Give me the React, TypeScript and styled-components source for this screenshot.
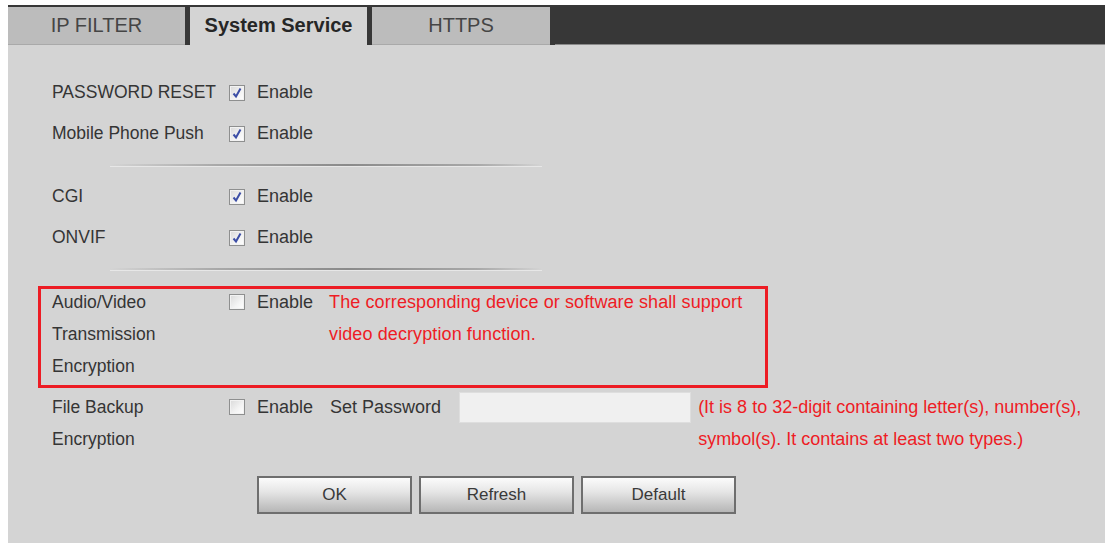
import styled, { createGlobalStyle } from "styled-components";

const GlobalStyle = createGlobalStyle`
  body {
    margin: 0;
    background: #ffffff;
    font-family: "Liberation Sans", Arial, sans-serif;
    color: #353535;
  }
`;

/**
 * Outer frame with the white page border
 */
const Page = styled.div`
  padding: 5px 0 0 8px;
`;

const Panel = styled.div`
  background: #d4d4d4;
  height: 538px;
  overflow: hidden;
`;

/**
 * Tab strip
 */
const TabBar = styled.div`
  display: flex;
  gap: 5px;
  height: 40px;
  padding-top: 2px;
  box-sizing: border-box;
  background: #373737;
`;

const Tab = styled.div<{ active?: boolean; width?: number }>`
  width: ${props => props.width ?? 177}px;
  display: flex;
  align-items: center;
  justify-content: center;
  font-size: 20px;
  background: ${props => props.active ? "#d4d4d4" : "#bcbcbc"};
  color: ${props => props.active ? "#262626" : "#454545"};
  font-weight: ${props => props.active ? "bold" : "normal"};
  border-bottom: 1px solid ${props => props.active ? "#d4d4d4" : "#a9a9a9"};
`;

const TabFiller = styled.div`
  flex: 1;
  border-bottom: 1px solid #8a8a8a;
`;

/**
 * Settings form
 */
const Form = styled.div`
  padding-top: 27px;
  font-size: 18px;
`;

const Row = styled.div`
  display: grid;
  grid-template-columns: 177px 1fr;
  align-items: center;
  height: 41px;
  padding-left: 44px;
`;

const Options = styled.div<{ top?: boolean }>`
  display: flex;
  align-items: ${props => props.top ? "flex-start" : "center"};
`;

const Divider = styled.div<{ after?: number }>`
  width: 432px;
  height: 2px;
  margin: 10px 0 ${props => props.after ?? 10}px 102px;
  background: linear-gradient(
    to right,
    rgba(150, 150, 150, 0) 0%,
    #a8a8a8 25%,
    #8a8a8a 55%,
    #a8a8a8 85%,
    rgba(150, 150, 150, 0) 100%
  );
  box-shadow: 0 1px 0 rgba(255, 255, 255, 0.45);
`;

/**
 * Red outline around the encryption option
 */
const Highlight = styled.div`
  width: 730px;
  margin-left: 30px;
  padding: 0 0 6px 14px;
  box-sizing: border-box;
  outline: 3px solid #ed1c24;
  outline-offset: -3px;
`;

const TallRow = styled.div<{ indent?: number }>`
  display: grid;
  grid-template-columns: 177px 1fr;
  align-items: start;
  line-height: 32px;
  padding-left: ${props => props.indent ?? 0}px;
  margin-top: ${props => props.indent ? 3 : 0}px;
`;

const Label = styled.div`
  font-size: 17.5px;
`;

const CheckBox = styled.span<{ top?: number }>`
  width: 16px;
  height: 16px;
  box-sizing: border-box;
  flex: none;
  border: 1px solid #8e8f8f;
  background: linear-gradient(135deg, #d9d9d9 0%, #f4f4f4 60%, #ffffff 100%);
  box-shadow: inset 0 0 0 1px #f2f2f2;
  display: flex;
  align-items: center;
  justify-content: center;
  margin-top: ${props => props.top ?? 0}px;
`;

const EnableText = styled.span`
  margin-left: 12px;
`;

const Note = styled.div<{ width: number; left: number; spacing?: number }>`
  color: #ee1c25;
  margin-left: ${props => props.left}px;
  max-width: ${props => props.width}px;
  letter-spacing: ${props => props.spacing ?? 0}px;
`;

const FieldLabel = styled.span`
  margin-left: 17px;
`;

const PasswordInput = styled.input`
  width: 232px;
  height: 31px;
  margin: 1px 0 0 18px;
  box-sizing: border-box;
  border: 1px solid #dedede;
  background: #f0f0f0;
  outline: none;
`;

const ButtonRow = styled.div`
  display: flex;
  gap: 7px;
  margin: 21px 0 0 249px;
`;

const Button = styled.button`
  width: 155px;
  height: 38px;
  border: 2px solid #6e6e6e;
  background: linear-gradient(to bottom, #fbfbfb 0%, #e6e6e6 40%, #b6b6b6 100%);
  font-family: "Liberation Sans", Arial, sans-serif;
  font-size: 17px;
  color: #3a3a3a;
  padding: 0;
`;

const Check = ({ checked, top }: { checked?: boolean; top?: number }) => (
  <CheckBox top={top}>
    {checked && (
      <svg width="12" height="12" viewBox="0 0 12 12">
        <path d="M2.5 6.5 L5 9.5 L9.5 1.5" fill="none" stroke="#3c4ea6" strokeWidth="2" />
      </svg>
    )}
  </CheckBox>
);

const simpleOptions = [
  ["PASSWORD RESET", "Mobile Phone Push"],
  ["CGI", "ONVIF"],
];

const App = (): JSX.Element => {
  return (
    <Page>
      <GlobalStyle />
      <Panel>
        <TabBar>
          <Tab>IP FILTER</Tab>
          <Tab active>System Service</Tab>
          <Tab width={178}>HTTPS</Tab>
          <TabFiller />
        </TabBar>

        <Form>
          {simpleOptions.map((group, i) => (
            <div key={i}>
              {group.map(name => (
                <Row key={name}>
                  <Label>{name}</Label>
                  <Options>
                    <Check checked />
                    <EnableText>Enable</EnableText>
                  </Options>
                </Row>
              ))}
              <Divider after={i === 0 ? 10 : 16} />
            </div>
          ))}

          <Highlight>
            <TallRow>
              <Label>
                Audio/Video<br />Transmission<br />Encryption
              </Label>
              <Options top>
                <Check top={8} />
                <EnableText>Enable</EnableText>
                <Note left={16} width={425} spacing={0.1}>
                  The corresponding device or software shall support video decryption function.
                </Note>
              </Options>
            </TallRow>
          </Highlight>

          <TallRow indent={44}>
            <Label>
              File Backup<br />Encryption
            </Label>
            <Options top>
              <Check top={8} />
              <EnableText>Enable</EnableText>
              <FieldLabel>Set Password</FieldLabel>
              <PasswordInput type="password" />
              <Note left={7} width={400}>
                (It is 8 to 32-digit containing letter(s), number(s), symbol(s). It contains at least two types.)
              </Note>
            </Options>
          </TallRow>

          <ButtonRow>
            <Button>OK</Button>
            <Button>Refresh</Button>
            <Button>Default</Button>
          </ButtonRow>
        </Form>
      </Panel>
    </Page>
  );
};

export default App;
